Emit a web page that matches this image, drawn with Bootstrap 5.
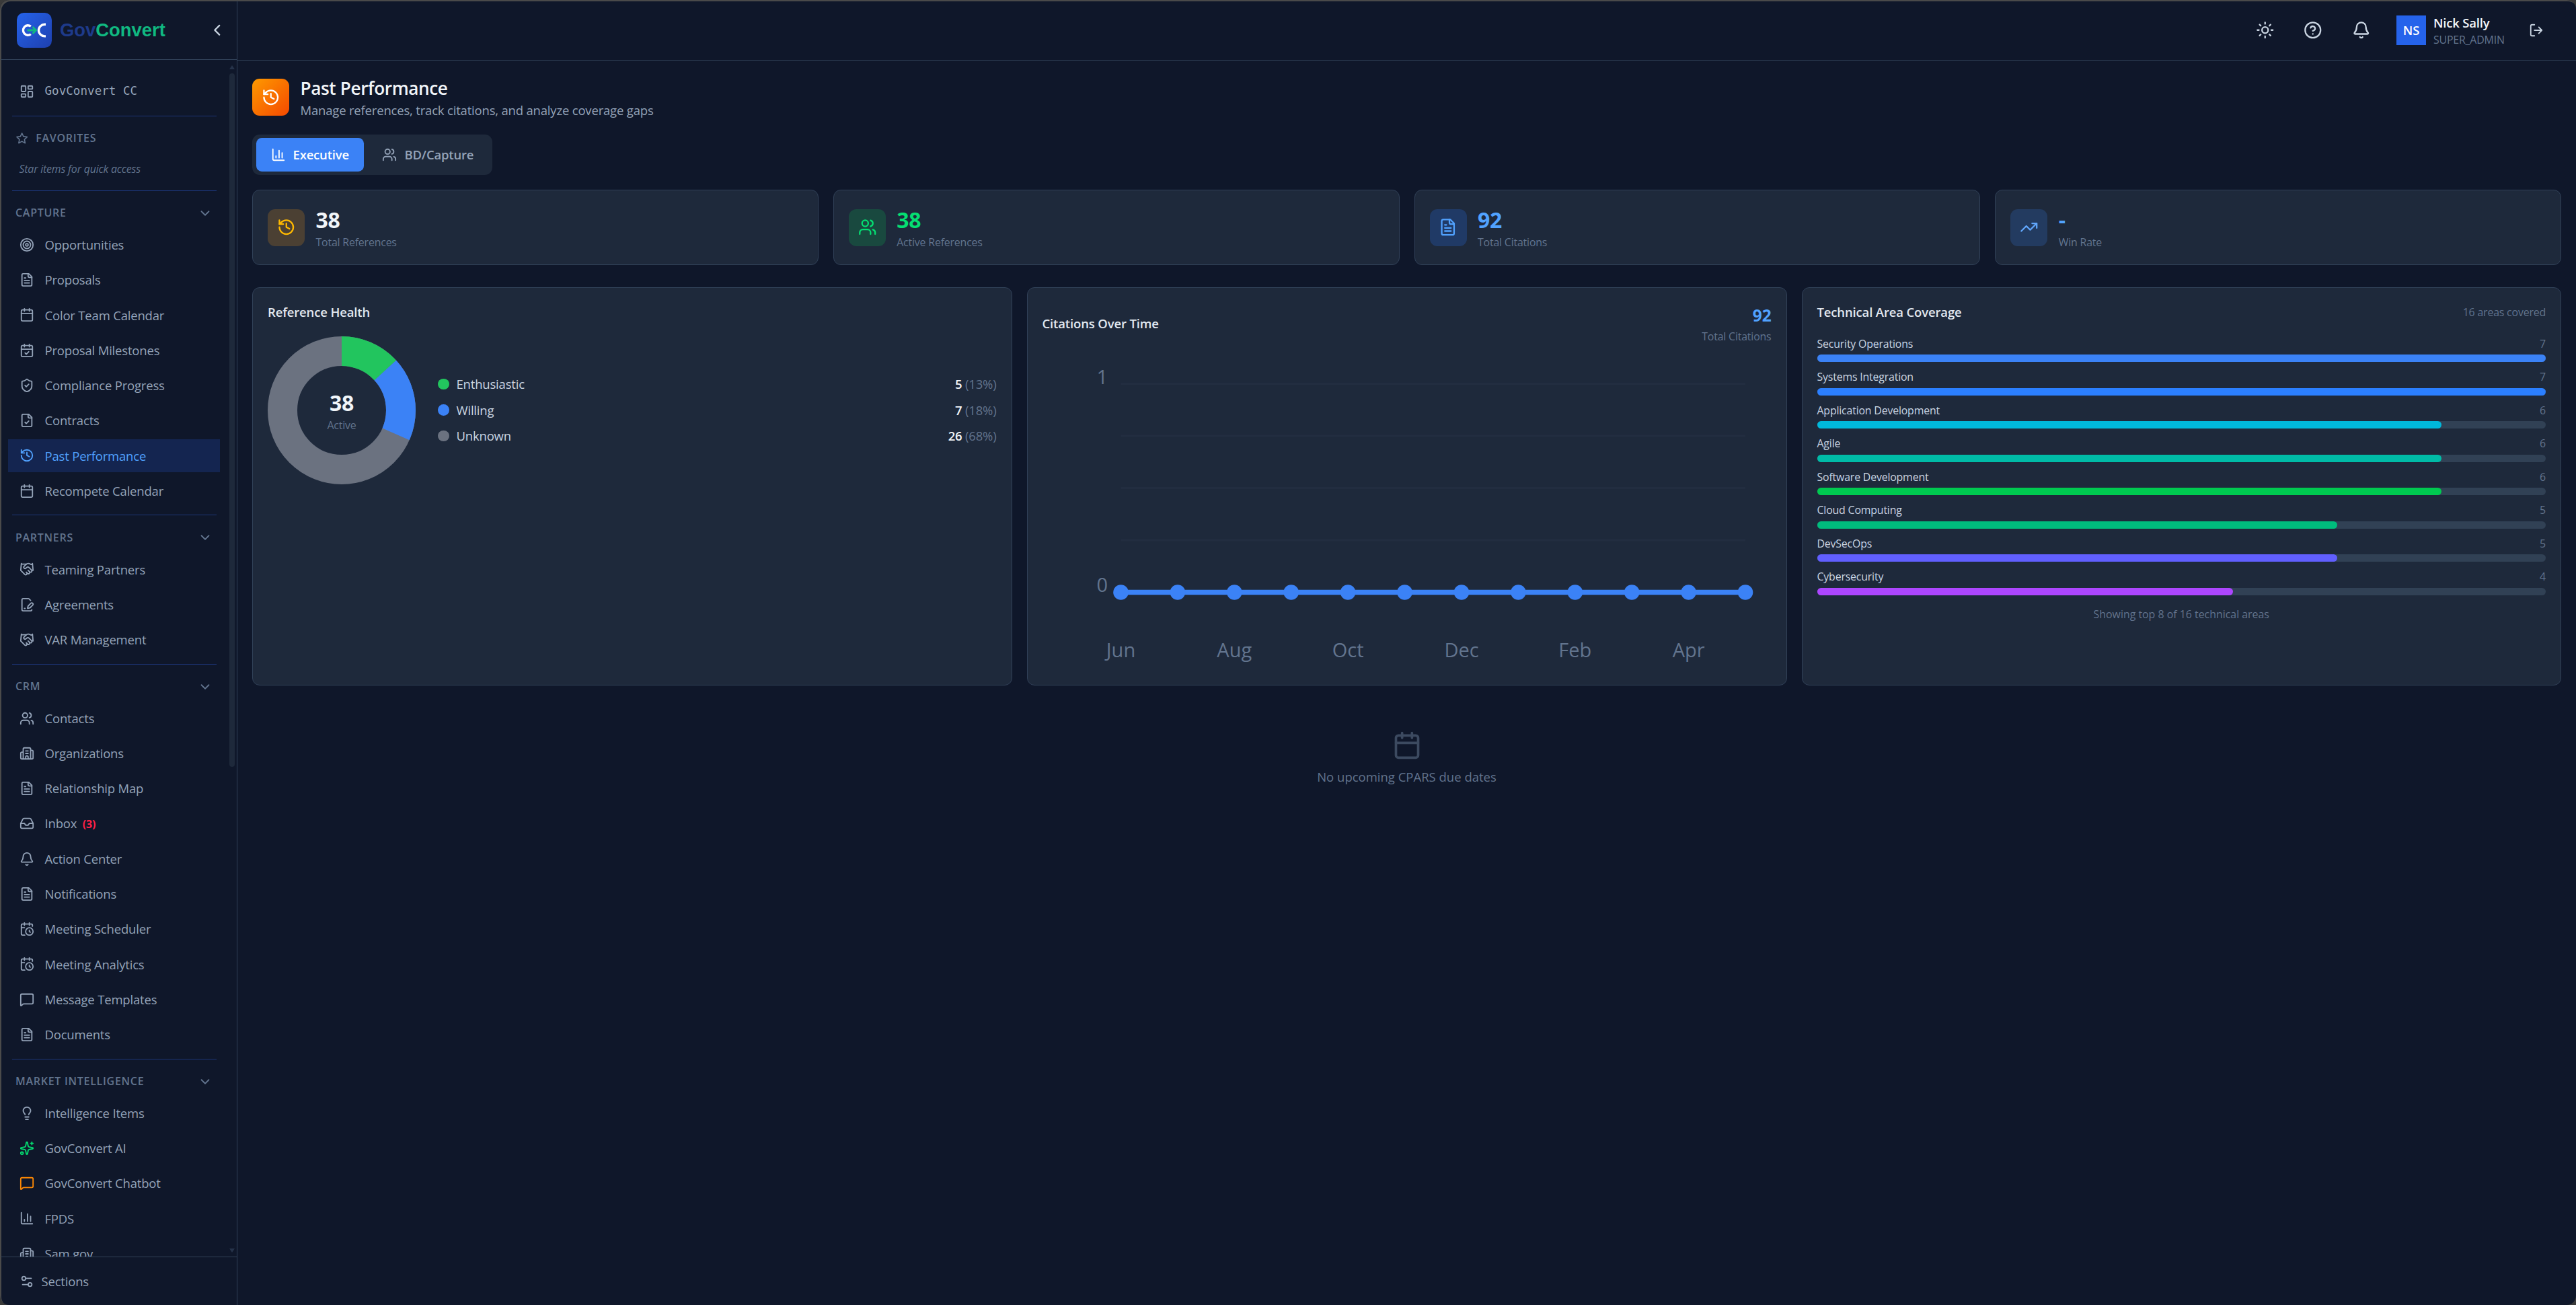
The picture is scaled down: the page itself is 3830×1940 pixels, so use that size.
<!DOCTYPE html>
<html lang="en">
<head>
  <meta charset="UTF-8">
  <meta name="viewport" content="width=device-width, initial-scale=1.0">
  <title>Past Performance - GovConvert</title>
  <link href="https://cdn.jsdelivr.net/npm/bootstrap@5.3.3/dist/css/bootstrap.min.css" rel="stylesheet">
  <style>
    :root { font-size: 22px; }
    body { font-family: "Open Sans", "Noto Sans", sans-serif; font-size: 18.5px; line-height: 27.5px; letter-spacing: -.01em; color: #94a3b8; background: #3a3a3a; overflow: hidden; }
    .window-frame { height: 1940px; padding: 1px 0 0 1px; background: #0f172a; border-radius: 14px; overflow: hidden; box-shadow: inset 2px 2px 0 #4a4a4a; }
    .ico { width: 22px; height: 22px; flex: none; fill: none; stroke: currentColor; stroke-width: 2; stroke-linecap: round; stroke-linejoin: round; }
    .ico-sm { width: 19.25px; height: 19.25px; }
    .ico-lg { width: 27.5px; height: 27.5px; }
    .txt-xs { font-size: 15.9px; line-height: 22px; }
    .txt-dim { color: #62748e; }
    .txt-soft { color: #cad5e2; }
    .txt-bright { color: #f1f5f9; }
    .txt-blue { color: #51a2ff; }
    .txt-green { color: #05df72; }

    /* sidebar */
    .sidebar { width: 352px; border-right: 1px solid #314158; }
    .brand-row { height: 88px; padding: 0 16px 0 24px; border-bottom: 1px solid #314158; }
    .brand-name { font: 700 27.4px/1 "Liberation Sans", Arial, sans-serif; letter-spacing: 0; color: #10b981; margin-left: 12px; }
    .brand-name span { color: #1e3a8a; }
    .nav-scroll { min-height: 0; overflow: hidden; }
    .nav-list { padding: 22px 0 0 11px; width: 326px; }
    .side-link { display: flex; align-items: center; height: 49.5px; padding: 0 16.5px; gap: 16px; margin-bottom: 2.75px; color: #94a3b8; text-decoration: none; white-space: nowrap; }
    .side-link.current { background: #142550; color: #51a2ff; }
    .dash-label { font-family: "DejaVu Sans Mono", monospace; font-size: 17.6px; letter-spacing: 0; }
    .inbox-count { margin-left: 4px; font-size: 16px; font-weight: 700; color: #ff2047; }
    .side-rule { height: 1px; background: #1c3578; margin: 11px 5px 11px 6px; }
    .side-head { height: 44.25px; padding: 0 11px; font-size: 16px; font-weight: 600; letter-spacing: .045em; color: #62748e; }
    .side-hint { height: 44px; padding: 0 16.5px; line-height: 44px; font-style: italic; }
    .scroll-gutter { width: 14px; padding: 8px 3px 6px; }
    .scroll-gutter svg { width: 8px; height: 6px; fill: #26334a; }
    .scroll-thumb { width: 8px; height: 1031px; border-radius: 4px; background: #1e293b; }
    .side-foot { height: 72px; padding-left: 27.5px; border-top: 1px solid #314158; }

    /* top bar */
    .top-bar { height: 89px; padding-right: 48px; border-bottom: 1px solid #314158; }
    .top-gap { margin-left: 44px; }
    .avatar-box { width: 44px; height: 44px; margin-left: 39px; background: #2563eb; color: #fff; font-weight: 600; }
    .user-box { width: 142px; margin: 0 0 0 11px; }
    .user-role { margin-top: 1px; }

    /* page */
    .page-body { padding: 21.5px 22px 0; }
    .tile { width: 55px; height: 55px; border-radius: 11px; flex: none; }
    .tile-orange { background: linear-gradient(135deg, #fe9a00, #f54900); color: #fff; }
    .tile-amber { background: #4b4033; color: #ffb900; }
    .tile-green { background: #19493f; color: #05df72; }
    .tile-blue { background: #203a66; color: #51a2ff; }
    .tile-sky { background: #233b60; color: #60a5fa; }
    .tile-text { margin-left: 16.5px; }
    .page-title { font-size: 26.2px; line-height: 38.5px; font-weight: 600; letter-spacing: -.015em; }
    .tab-strip { width: fit-content; padding: 5.5px; border-radius: 11px; background: #1e293b; gap: 5.5px; }
    .tab-btn { height: 49.5px; padding: 0 22px; border: 0; border-radius: 8.25px; background: none; color: #94a3b8; font-weight: 600; letter-spacing: -.01em; }
    .tab-btn.on { background: #3b82f6; color: #fff; }
    .stat-grid { display: grid; grid-template-columns: repeat(4, 1fr); gap: 22px; }
    .chart-grid { display: grid; grid-template-columns: repeat(3, 1fr); gap: 22px; margin-top: 33px; }
    .panel { background: #1e293b; border: 1px solid #314158; border-radius: 11px; padding: 22px; }
    .chart-grid .panel { height: 592px; }
    .panel-title { font-size: 18.5px; line-height: 27.5px; font-weight: 600; letter-spacing: -.008em; color: #e2e8f0; margin: 0; }
    .big-num { font-size: 32px; line-height: 44px; font-weight: 700; }
    .mid-num { font-size: 24.5px; line-height: 38.5px; font-weight: 700; }
    .donut-box { display: grid; width: 220px; height: 220px; flex: none; }
    .donut-box > * { grid-area: 1 / 1; }
    .donut-box circle { fill: none; stroke-width: 44; }
    .legend-list { margin-left: 33px; }
    .legend-dot { width: 16.5px; height: 16.5px; border-radius: 50%; }
    .line-chart text { font-size: 29px; fill: #62748e; letter-spacing: 0; }
    .line-chart .grid-lines { stroke: #222d40; stroke-width: 3; }
    .area-track { height: 11px; border-radius: 5.5px; background: #314155; margin: 5.5px 0 11px; }
    .area-fill { height: 11px; border-radius: 5.5px; }
    .area-more { padding-top: 6px; letter-spacing: 0; }
    .empty-note { margin-top: 67px; letter-spacing: 0; }
    .empty-note .ico { width: 44px; height: 44px; color: #3c4a60; }
  </style>
</head>
<body>

  <!-- icon sprite -->
  <svg class="d-none">
    <symbol id="dashboard" viewBox="0 0 24 24"><rect x="3" y="3" width="7" height="9" rx="1"/><rect x="14" y="3" width="7" height="5" rx="1"/><rect x="14" y="12" width="7" height="9" rx="1"/><rect x="3" y="16" width="7" height="5" rx="1"/></symbol>
    <symbol id="star" viewBox="0 0 24 24"><path d="M12 2.5l2.9 6.1 6.6.9-4.8 4.6 1.2 6.7-5.9-3.2-5.9 3.2 1.2-6.7-4.8-4.6 6.6-.9z"/></symbol>
    <symbol id="target" viewBox="0 0 24 24"><circle cx="12" cy="12" r="10"/><circle cx="12" cy="12" r="6"/><circle cx="12" cy="12" r="2"/></symbol>
    <symbol id="file-text" viewBox="0 0 24 24"><path d="M15 2H6a2 2 0 0 0-2 2v16a2 2 0 0 0 2 2h12a2 2 0 0 0 2-2V7Z"/><path d="M14 2v4a2 2 0 0 0 2 2h4M10 9H8M16 13H8M16 17H8"/></symbol>
    <symbol id="calendar" viewBox="0 0 24 24"><path d="M8 2v4M16 2v4M3 10h18"/><rect x="3" y="4" width="18" height="18" rx="2"/></symbol>
    <symbol id="calendar-check" viewBox="0 0 24 24"><path d="M8 2v4M16 2v4M3 10h18M9 16l2 2 4-4"/><rect x="3" y="4" width="18" height="18" rx="2"/></symbol>
    <symbol id="shield" viewBox="0 0 24 24"><path d="M20 13c0 5-3.5 7.5-7.66 8.95a1 1 0 0 1-.67-.01C7.5 20.5 4 18 4 13V6a1 1 0 0 1 1-1c2 0 4.5-1.2 6.24-2.72a1.17 1.17 0 0 1 1.52 0C14.51 3.81 17 5 19 5a1 1 0 0 1 1 1z"/><path d="M9 12l2 2 4-4"/></symbol>
    <symbol id="file-check" viewBox="0 0 24 24"><path d="M15 2H6a2 2 0 0 0-2 2v16a2 2 0 0 0 2 2h12a2 2 0 0 0 2-2V7Z"/><path d="M14 2v4a2 2 0 0 0 2 2h4M9 15l2 2 4-4"/></symbol>
    <symbol id="history" viewBox="0 0 24 24"><path d="M3 12a9 9 0 1 0 9-9 9.75 9.75 0 0 0-6.74 2.74L3 8"/><path d="M3 3v5h5M12 7v5l4 2"/></symbol>
    <symbol id="handshake" viewBox="0 0 24 24"><path d="m11 17 2 2a1 1 0 1 0 3-3"/><path d="m14 14 2.5 2.5a1 1 0 1 0 3-3l-3.88-3.88a3 3 0 0 0-4.24 0l-.88.88a1 1 0 1 1-3-3l2.81-2.81a5.79 5.79 0 0 1 7.06-.87l.47.28a2 2 0 0 0 1.42.25L21 4"/><path d="m21 3 1 11h-2M3 3 2 14l6.5 6.5a1 1 0 1 0 3-3M3 4h8"/></symbol>
    <symbol id="file-pen" viewBox="0 0 24 24"><path d="m18 5-2.414-2.414A2 2 0 0 0 14.172 2H6a2 2 0 0 0-2 2v16a2 2 0 0 0 2 2h12a2 2 0 0 0 2-2"/><path d="M21.378 12.626a1 1 0 0 0-3.004-3.004l-4.01 4.012a2 2 0 0 0-.506.854l-.837 2.87a.5.5 0 0 0 .62.62l2.87-.837a2 2 0 0 0 .854-.506z"/><path d="M8 18h1"/></symbol>
    <symbol id="users" viewBox="0 0 24 24"><path d="M16 21v-2a4 4 0 0 0-4-4H6a4 4 0 0 0-4 4v2M16 3.128a4 4 0 0 1 0 7.744M22 21v-2a4 4 0 0 0-3-3.87"/><circle cx="9" cy="7" r="4"/></symbol>
    <symbol id="building" viewBox="0 0 24 24"><path d="M10 12h4M10 8h4M14 21v-3a2 2 0 0 0-4 0v3M6 10H4a2 2 0 0 0-2 2v7a2 2 0 0 0 2 2h16a2 2 0 0 0 2-2V9a2 2 0 0 0-2-2h-2M6 21V5a2 2 0 0 1 2-2h8a2 2 0 0 1 2 2v16"/></symbol>
    <symbol id="inbox" viewBox="0 0 24 24"><path d="M22 12h-6l-2 3h-4l-2-3H2"/><path d="M5.45 5.11 2 12v6a2 2 0 0 0 2 2h16a2 2 0 0 0 2-2v-6l-3.45-6.89A2 2 0 0 0 16.76 4H7.24a2 2 0 0 0-1.79 1.11z"/></symbol>
    <symbol id="bell" viewBox="0 0 24 24"><path d="M10.268 21a2 2 0 0 0 3.464 0M3.262 15.326A1 1 0 0 0 4 17h16a1 1 0 0 0 .74-1.673C19.41 13.956 18 12.499 18 8A6 6 0 0 0 6 8c0 4.499-1.411 5.956-2.738 7.326"/></symbol>
    <symbol id="calendar-clock" viewBox="0 0 24 24"><path d="M16 14v2.2l1.6 1M16 2v4M21 7.5V6a2 2 0 0 0-2-2H5a2 2 0 0 0-2 2v14a2 2 0 0 0 2 2h3.5M3 10h5M8 2v4"/><circle cx="16" cy="16" r="6"/></symbol>
    <symbol id="message" viewBox="0 0 24 24"><path d="M22 17a2 2 0 0 1-2 2H6.828a2 2 0 0 0-1.414.586l-2.202 2.202A.71.71 0 0 1 2 21.286V5a2 2 0 0 1 2-2h16a2 2 0 0 1 2 2z"/></symbol>
    <symbol id="bulb" viewBox="0 0 24 24"><path d="M15 14c.2-1 .7-1.7 1.5-2.5 1-.9 1.5-2.2 1.5-3.5A6 6 0 0 0 6 8c0 1 .2 2.2 1.5 3.5.7.7 1.3 1.5 1.5 2.5M9 18h6M10 22h4"/></symbol>
    <symbol id="sparkles" viewBox="0 0 24 24"><path d="M11.017 2.814a1 1 0 0 1 1.966 0l1.051 5.558a2 2 0 0 0 1.594 1.594l5.558 1.051a1 1 0 0 1 0 1.966l-5.558 1.051a2 2 0 0 0-1.594 1.594l-1.051 5.558a1 1 0 0 1-1.966 0l-1.051-5.558a2 2 0 0 0-1.594-1.594l-5.558-1.051a1 1 0 0 1 0-1.966l5.558-1.051a2 2 0 0 0 1.594-1.594z"/><path d="M20 2v4M22 4h-4"/><circle cx="4" cy="20" r="2"/></symbol>
    <symbol id="chart" viewBox="0 0 24 24"><path d="M3 3v16a2 2 0 0 0 2 2h16M18 17V9M13 17V5M8 17v-3"/></symbol>
    <symbol id="sliders" viewBox="0 0 24 24"><path d="M14 17H5M19 7h-9"/><circle cx="17" cy="17" r="3"/><circle cx="7" cy="7" r="3"/></symbol>
    <symbol id="chev-down" viewBox="0 0 24 24"><path d="M6 9l6 6 6-6"/></symbol>
    <symbol id="chev-left" viewBox="0 0 24 24"><path d="M15 18l-6-6 6-6"/></symbol>
    <symbol id="sun" viewBox="0 0 24 24"><circle cx="12" cy="12" r="4"/><path d="M12 2v2M12 20v2M4.93 4.93l1.41 1.41M17.66 17.66l1.41 1.41M2 12h2M20 12h2M6.34 17.66l-1.41 1.41M19.07 4.93l-1.41 1.41"/></symbol>
    <symbol id="help" viewBox="0 0 24 24"><circle cx="12" cy="12" r="10"/><path d="M9.09 9a3 3 0 0 1 5.83 1c0 2-3 3-3 3M12 17h.01"/></symbol>
    <symbol id="logout" viewBox="0 0 24 24"><path d="M16 17l5-5-5-5M21 12H9M9 21H5a2 2 0 0 1-2-2V5a2 2 0 0 1 2-2h4"/></symbol>
    <symbol id="trend" viewBox="0 0 24 24"><path d="M16 7h6v6M22 7l-8.500 8.500-5-5L2 17"/></symbol>
  </svg>

  <div class="window-frame d-flex">

    <aside class="sidebar d-flex flex-column flex-shrink-0">
      <div class="brand-row d-flex align-items-center flex-shrink-0">
        <svg width="52" height="52" viewBox="0 0 52 52" fill="none">
          <defs><linearGradient id="brandGrad" x1="0" y1="0" x2="1" y2="1"><stop offset="0" stop-color="#2563eb"/><stop offset="1" stop-color="#1e40af"/></linearGradient></defs>
          <rect width="52" height="52" rx="10.500" fill="url(#brandGrad)"/>
          <path d="M20.800 20.300A7 7.300 0 1 0 20.800 31.700" stroke="#fff" stroke-width="3.400"/>
          <path d="M43 17.300H41.500A9 8.800 0 0 0 41.500 34.900H43" stroke="#fff" stroke-width="3.400"/>
          <path d="M15.500 26H28M23.500 21l5 5-5 5" stroke="#10b981" stroke-width="2.800"/>
        </svg>
        <div class="brand-name"><span>Gov</span>Convert</div>
        <svg class="ico ico-lg ms-auto txt-soft"><use href="#chev-left"/></svg>
      </div>

      <div class="nav-scroll d-flex flex-grow-1">
        <nav class="nav-list">
          <a class="side-link" href="#"><svg class="ico"><use href="#dashboard"/></svg><span class="dash-label">GovConvert CC</span></a>
          <div class="side-rule"></div>
          <div class="side-head d-flex align-items-center gap-2"><svg class="ico ico-sm"><use href="#star"/></svg>FAVORITES</div>
          <div class="side-hint txt-dim"><span class="txt-xs">Star items for quick access</span></div>
          <div class="side-rule"></div>

          <div class="side-head d-flex align-items-center justify-content-between">CAPTURE<svg class="ico"><use href="#chev-down"/></svg></div>
          <a class="side-link" href="#"><svg class="ico"><use href="#target"/></svg>Opportunities</a>
          <a class="side-link" href="#"><svg class="ico"><use href="#file-text"/></svg>Proposals</a>
          <a class="side-link" href="#"><svg class="ico"><use href="#calendar"/></svg>Color Team Calendar</a>
          <a class="side-link" href="#"><svg class="ico"><use href="#calendar-check"/></svg>Proposal Milestones</a>
          <a class="side-link" href="#"><svg class="ico"><use href="#shield"/></svg>Compliance Progress</a>
          <a class="side-link" href="#"><svg class="ico"><use href="#file-check"/></svg>Contracts</a>
          <a class="side-link current" href="#"><svg class="ico"><use href="#history"/></svg>Past Performance</a>
          <a class="side-link" href="#"><svg class="ico"><use href="#calendar"/></svg>Recompete Calendar</a>
          <div class="side-rule"></div>

          <div class="side-head d-flex align-items-center justify-content-between">PARTNERS<svg class="ico"><use href="#chev-down"/></svg></div>
          <a class="side-link" href="#"><svg class="ico"><use href="#handshake"/></svg>Teaming Partners</a>
          <a class="side-link" href="#"><svg class="ico"><use href="#file-pen"/></svg>Agreements</a>
          <a class="side-link" href="#"><svg class="ico"><use href="#handshake"/></svg>VAR Management</a>
          <div class="side-rule"></div>

          <div class="side-head d-flex align-items-center justify-content-between">CRM<svg class="ico"><use href="#chev-down"/></svg></div>
          <a class="side-link" href="#"><svg class="ico"><use href="#users"/></svg>Contacts</a>
          <a class="side-link" href="#"><svg class="ico"><use href="#building"/></svg>Organizations</a>
          <a class="side-link" href="#"><svg class="ico"><use href="#file-text"/></svg>Relationship Map</a>
          <a class="side-link" href="#"><svg class="ico"><use href="#inbox"/></svg><span>Inbox <span class="inbox-count">(3)</span></span></a>
          <a class="side-link" href="#"><svg class="ico"><use href="#bell"/></svg>Action Center</a>
          <a class="side-link" href="#"><svg class="ico"><use href="#file-text"/></svg>Notifications</a>
          <a class="side-link" href="#"><svg class="ico"><use href="#calendar-clock"/></svg>Meeting Scheduler</a>
          <a class="side-link" href="#"><svg class="ico"><use href="#calendar-clock"/></svg>Meeting Analytics</a>
          <a class="side-link" href="#"><svg class="ico"><use href="#message"/></svg>Message Templates</a>
          <a class="side-link" href="#"><svg class="ico"><use href="#file-text"/></svg>Documents</a>
          <div class="side-rule"></div>

          <div class="side-head d-flex align-items-center justify-content-between">MARKET INTELLIGENCE<svg class="ico"><use href="#chev-down"/></svg></div>
          <a class="side-link" href="#"><svg class="ico"><use href="#bulb"/></svg>Intelligence Items</a>
          <a class="side-link" href="#"><svg class="ico" color="#05df72"><use href="#sparkles"/></svg>GovConvert AI</a>
          <a class="side-link" href="#"><svg class="ico" color="#ff8904"><use href="#message"/></svg>GovConvert Chatbot</a>
          <a class="side-link" href="#"><svg class="ico"><use href="#chart"/></svg>FPDS</a>
          <a class="side-link" href="#"><svg class="ico"><use href="#building"/></svg>Sam.gov</a>
        </nav>
        <div class="scroll-gutter ms-auto d-flex flex-column justify-content-between">
          <div class="d-flex flex-column">
            <svg viewBox="0 0 8 6"><path d="M4 0l4 6H0z"/></svg>
            <div class="scroll-thumb mt-1"></div>
          </div>
          <svg viewBox="0 0 8 6"><path d="M4 6l4-6H0z"/></svg>
        </div>
      </div>

      <div class="side-foot d-flex align-items-center gap-2 flex-shrink-0">
        <svg class="ico"><use href="#sliders"/></svg><span>Sections</span>
      </div>
    </aside>

    <div class="flex-grow-1 d-flex flex-column">
      <header class="top-bar d-flex align-items-center justify-content-end txt-soft">
        <svg class="ico ico-lg"><use href="#sun"/></svg>
        <svg class="ico ico-lg top-gap"><use href="#help"/></svg>
        <svg class="ico ico-lg top-gap"><use href="#bell"/></svg>
        <div class="avatar-box d-flex align-items-center justify-content-center">NS</div>
        <div class="user-box">
          <div class="fw-semibold txt-bright">Nick Sally</div>
          <div class="user-role txt-xs txt-dim">SUPER_ADMIN</div>
        </div>
        <svg class="ico"><use href="#logout"/></svg>
      </header>

      <main class="page-body">
        <div class="d-flex align-items-center">
          <div class="tile tile-orange d-flex align-items-center justify-content-center"><svg class="ico ico-lg"><use href="#history"/></svg></div>
          <div class="tile-text">
            <h1 class="page-title txt-bright m-0">Past Performance</h1>
            <div>Manage references, track citations, and analyze coverage gaps</div>
          </div>
        </div>

        <div class="tab-strip d-flex my-3">
          <button class="tab-btn on d-flex align-items-center gap-2" type="button"><svg class="ico"><use href="#chart"/></svg>Executive</button>
          <button class="tab-btn d-flex align-items-center gap-2" type="button"><svg class="ico"><use href="#users"/></svg>BD/Capture</button>
        </div>

        <div class="stat-grid">
          <div class="panel d-flex align-items-center">
            <div class="tile tile-amber d-flex align-items-center justify-content-center"><svg class="ico ico-lg"><use href="#history"/></svg></div>
            <div class="tile-text"><div class="big-num txt-bright">38</div><div class="txt-xs txt-dim">Total References</div></div>
          </div>
          <div class="panel d-flex align-items-center">
            <div class="tile tile-green d-flex align-items-center justify-content-center"><svg class="ico ico-lg"><use href="#users"/></svg></div>
            <div class="tile-text"><div class="big-num txt-green">38</div><div class="txt-xs txt-dim">Active References</div></div>
          </div>
          <div class="panel d-flex align-items-center">
            <div class="tile tile-blue d-flex align-items-center justify-content-center"><svg class="ico ico-lg"><use href="#file-text"/></svg></div>
            <div class="tile-text"><div class="big-num txt-blue">92</div><div class="txt-xs txt-dim">Total Citations</div></div>
          </div>
          <div class="panel d-flex align-items-center">
            <div class="tile tile-sky d-flex align-items-center justify-content-center"><svg class="ico ico-lg"><use href="#trend"/></svg></div>
            <div class="tile-text"><div class="big-num txt-blue">-</div><div class="txt-xs txt-dim">Win Rate</div></div>
          </div>
        </div>

        <div class="chart-grid">
          <section class="panel">
            <h2 class="panel-title">Reference Health</h2>
            <div class="d-flex align-items-center mt-3">
              <div class="donut-box">
                <svg width="220" height="220" viewBox="0 0 220 220">
                  <g transform="rotate(-90 110 110)">
                    <circle cx="110" cy="110" r="88" pathLength="38" stroke="#6b7280"/>
                    <circle cx="110" cy="110" r="88" pathLength="38" stroke="#3b82f6" stroke-dasharray="7 31" stroke-dashoffset="-5"/>
                    <circle cx="110" cy="110" r="88" pathLength="38" stroke="#22c55e" stroke-dasharray="5 33"/>
                  </g>
                </svg>
                <div class="d-flex flex-column align-items-center justify-content-center">
                  <div class="big-num txt-bright">38</div>
                  <div class="txt-xs txt-dim">Active</div>
                </div>
              </div>
              <div class="flex-grow-1 d-flex flex-column gap-2 legend-list">
                <div class="d-flex align-items-center gap-2"><span class="legend-dot" style="background:#22c55e"></span><span class="txt-soft">Enthusiastic</span><span class="ms-auto txt-dim"><b class="txt-bright fw-semibold">5</b> (13%)</span></div>
                <div class="d-flex align-items-center gap-2"><span class="legend-dot" style="background:#3b82f6"></span><span class="txt-soft">Willing</span><span class="ms-auto txt-dim"><b class="txt-bright fw-semibold">7</b> (18%)</span></div>
                <div class="d-flex align-items-center gap-2"><span class="legend-dot" style="background:#6b7280"></span><span class="txt-soft">Unknown</span><span class="ms-auto txt-dim"><b class="txt-bright fw-semibold">26</b> (68%)</span></div>
              </div>
            </div>
          </section>

          <section class="panel">
            <div class="d-flex align-items-center justify-content-between">
              <h2 class="panel-title">Citations Over Time</h2>
              <div class="text-end"><div class="mid-num txt-blue">92</div><div class="txt-xs txt-dim">Total Citations</div></div>
            </div>
            <svg class="line-chart d-block mt-3" width="1084" height="463" viewBox="0 0 1084 463">
              <path class="grid-lines" d="M116.500 37.500H1045M116.500 115H1045M116.500 192.500H1045M116.500 270H1045M116.500 347.500H1045"/>
              <path d="M116.500 347.500H1045" stroke="#3b82f6" stroke-width="7.500"/>
              <g fill="#3b82f6">
                <circle cx="116.500" cy="347.500" r="11.300"/><circle cx="200.900" cy="347.500" r="11.300"/><circle cx="285.300" cy="347.500" r="11.300"/><circle cx="369.700" cy="347.500" r="11.300"/>
                <circle cx="454.100" cy="347.500" r="11.300"/><circle cx="538.500" cy="347.500" r="11.300"/><circle cx="623" cy="347.500" r="11.300"/><circle cx="707.400" cy="347.500" r="11.300"/>
                <circle cx="791.800" cy="347.500" r="11.300"/><circle cx="876.200" cy="347.500" r="11.300"/><circle cx="960.600" cy="347.500" r="11.300"/><circle cx="1045" cy="347.500" r="11.300"/>
              </g>
              <g text-anchor="end"><text x="97" y="38">1</text><text x="97" y="347">0</text></g>
              <g text-anchor="middle"><text x="116.500" y="444">Jun</text><text x="285.300" y="444">Aug</text><text x="454.100" y="444">Oct</text><text x="623" y="444">Dec</text><text x="791.800" y="444">Feb</text><text x="960.600" y="444">Apr</text></g>
            </svg>
          </section>

          <section class="panel">
            <div class="d-flex align-items-center justify-content-between mb-3">
              <h2 class="panel-title">Technical Area Coverage</h2>
              <span class="txt-xs txt-dim">16 areas covered</span>
            </div>
            <div class="txt-xs d-flex justify-content-between txt-soft">Security Operations<span class="txt-dim">7</span></div>
            <div class="area-track"><div class="area-fill" style="width:100%;background:#3b82f6"></div></div>
            <div class="txt-xs d-flex justify-content-between txt-soft">Systems Integration<span class="txt-dim">7</span></div>
            <div class="area-track"><div class="area-fill" style="width:100%;background:#2b7fff"></div></div>
            <div class="txt-xs d-flex justify-content-between txt-soft">Application Development<span class="txt-dim">6</span></div>
            <div class="area-track"><div class="area-fill" style="width:85.7%;background:#00b8db"></div></div>
            <div class="txt-xs d-flex justify-content-between txt-soft">Agile<span class="txt-dim">6</span></div>
            <div class="area-track"><div class="area-fill" style="width:85.7%;background:#00bba7"></div></div>
            <div class="txt-xs d-flex justify-content-between txt-soft">Software Development<span class="txt-dim">6</span></div>
            <div class="area-track"><div class="area-fill" style="width:85.7%;background:#00c950"></div></div>
            <div class="txt-xs d-flex justify-content-between txt-soft">Cloud Computing<span class="txt-dim">5</span></div>
            <div class="area-track"><div class="area-fill" style="width:71.4%;background:#00bc7d"></div></div>
            <div class="txt-xs d-flex justify-content-between txt-soft">DevSecOps<span class="txt-dim">5</span></div>
            <div class="area-track"><div class="area-fill" style="width:71.4%;background:#615fff"></div></div>
            <div class="txt-xs d-flex justify-content-between txt-soft">Cybersecurity<span class="txt-dim">4</span></div>
            <div class="area-track"><div class="area-fill" style="width:57.1%;background:#ad46ff"></div></div>
            <div class="txt-xs txt-dim text-center area-more">Showing top 8 of 16 technical areas</div>
          </section>
        </div>

        <div class="empty-note d-flex flex-column align-items-center txt-dim">
          <svg class="ico"><use href="#calendar"/></svg>
          <div class="mt-2">No upcoming CPARS due dates</div>
        </div>
      </main>
    </div>
  </div>

  <script src="https://cdn.jsdelivr.net/npm/bootstrap@5.3.3/dist/js/bootstrap.bundle.min.js"></script>
</body>
</html>
